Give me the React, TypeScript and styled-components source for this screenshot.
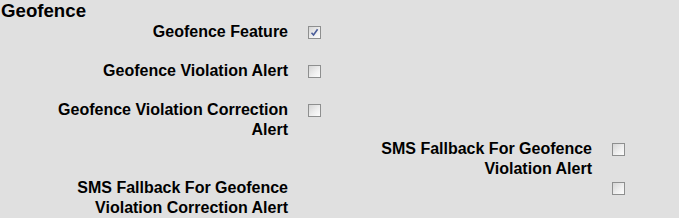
import React from 'react';
import styled, { createGlobalStyle } from 'styled-components';

const GlobalStyle = createGlobalStyle`
  html, body {
    margin: 0;
    padding: 0;
    background: #e0e0e0;
  }
  body {
    font-family: "Liberation Sans", Arial, sans-serif;
    color: #000;
  }
`;

const Section = styled.div`
  width: 679px;
  height: 218px;
  overflow: hidden;
`;

const Title = styled.h2`
  margin: 0;
  padding-left: 1px;
  font-size: 14pt;
  font-weight: bold;
  line-height: 21px;
`;

const Grid = styled.div`
  display: grid;
  grid-template-columns: 288px 13px 251px 13px;
  grid-auto-rows: 39px;
  column-gap: 20px;
  margin-top: 1px;
`;

const Label = styled.label<{ $col: number; $row: number }>`
  grid-column: ${p => p.$col};
  grid-row: ${p => p.$row};
  justify-self: end;
  max-width: 250px;
  text-align: right;
  font-size: 12pt;
  font-weight: bold;
  line-height: 20px;
`;

const Box = styled.span<{ $col: number; $row: number }>`
  grid-column: ${p => p.$col};
  grid-row: ${p => p.$row};
  margin-top: 4px;
  width: 13px;
  height: 13px;
  box-sizing: border-box;
  border: 1px solid #8e8f8f;
  background: linear-gradient(135deg, #d6d6d6 0%, #f0f0f0 60%, #fcfcfc 100%);
  display: flex;
  align-items: center;
  justify-content: center;
`;

type Item = {
  label: string;
  labelCol: number;
  boxCol: number;
  checked?: boolean;
};

const items: Item[] = [
  { label: 'Geofence Feature', labelCol: 1, boxCol: 2, checked: true },
  { label: 'Geofence Violation Alert', labelCol: 1, boxCol: 2 },
  { label: 'Geofence Violation Correction Alert', labelCol: 1, boxCol: 2 },
  { label: 'SMS Fallback For Geofence Violation Alert', labelCol: 3, boxCol: 4 },
  { label: 'SMS Fallback For Geofence Violation Correction Alert', labelCol: 1, boxCol: 4 },
];

const Check = () => (
  <svg width="9" height="9" viewBox="0 0 9 9">
    <path d="M1.5 4.8 L3.5 7 L7.6 1.2" fill="none" stroke="#4b5d99" strokeWidth="1.6" />
  </svg>
);

export default function App() {
  return (
    <Section>
      <GlobalStyle />
      <Title>Geofence</Title>
      <Grid>
        {items.map((it, i) => (
          <React.Fragment key={it.label}>
            <Label $col={it.labelCol} $row={i + 1}>{it.label}</Label>
            <Box $col={it.boxCol} $row={i + 1}>{it.checked && <Check />}</Box>
          </React.Fragment>
        ))}
      </Grid>
    </Section>
  );
}
